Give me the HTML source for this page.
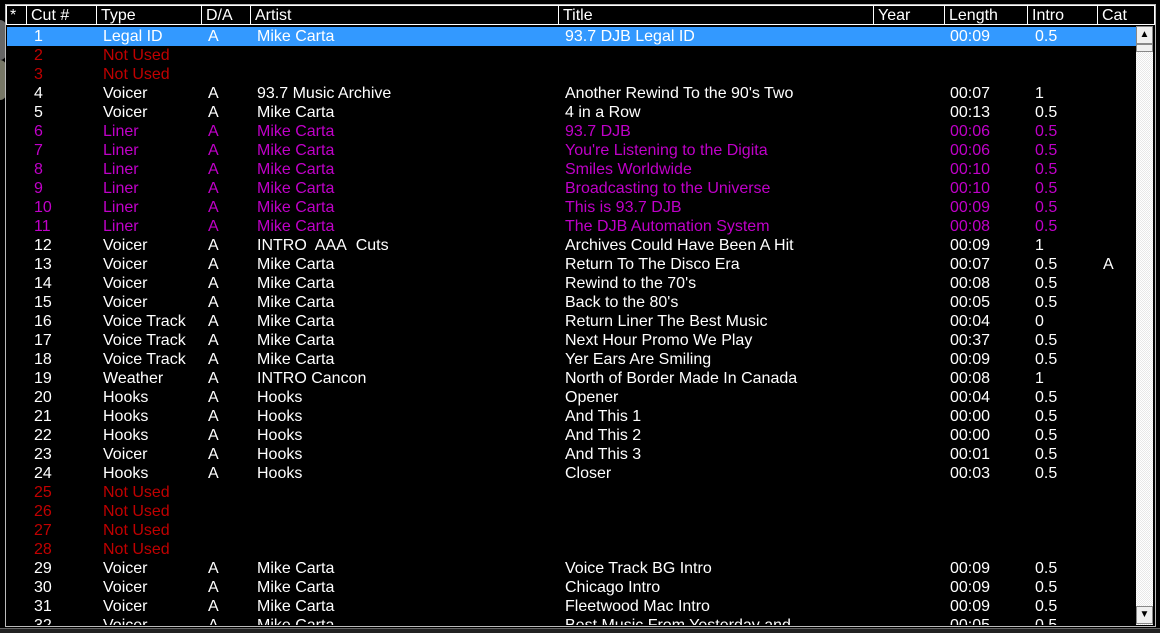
<!DOCTYPE html>
<html><head><style>
body{margin:0;width:1160px;height:632px;background:#000;overflow:hidden;position:relative;font-family:"Liberation Sans",Arial,sans-serif;font-size:16px;color:#fff}
.h{position:absolute;top:5px;height:20px;border:1px solid #fff;border-right:none;box-sizing:border-box;line-height:19px;padding-left:4px;color:#fff}
.r{position:absolute;left:7px;width:1129px;height:19px;line-height:20px}
.r span{position:absolute;top:0;white-space:nowrap}
.sel{background:#3399ff}
.red{color:#c00000}.mag{color:#c000c8}
</style></head><body>
<div style="position:absolute;left:0;top:20px;width:6px;height:40px;background:#666;border-radius:0 6px 6px 0"></div>
<div style="position:absolute;left:0;top:60px;width:6px;height:40px;background:#776;border-radius:0 6px 6px 0"></div>
<div style="position:absolute;left:5px;top:4px;width:1151px;height:623px;border:1px solid #bbb;box-sizing:border-box"></div>
<div style="position:absolute;left:0;top:628px;width:1160px;height:4px;background:#222;border-top:1px solid #666"></div>
<div class="h" style="left:6px;width:20px;padding-left:3px">*</div>
<div class="h" style="left:26px;width:70px">Cut #</div>
<div class="h" style="left:96px;width:105px">Type</div>
<div class="h" style="left:201px;width:49px">D/A</div>
<div class="h" style="left:250px;width:308px">Artist</div>
<div class="h" style="left:558px;width:315px">Title</div>
<div class="h" style="left:873px;width:71px">Year</div>
<div class="h" style="left:944px;width:83px">Length</div>
<div class="h" style="left:1027px;width:70px">Intro</div>
<div class="h" style="left:1097px;width:58px;border-right:1px solid #fff">Cat</div>
<div id="rows"></div>
<div style="position:absolute;left:1136px;top:26px;width:17px;height:599px;background:repeating-conic-gradient(#fff 0 25%,#e8e8e8 0 50%) 0 0/2px 2px"></div>
<div style="position:absolute;left:1136px;top:26px;width:17px;height:18px;background:#f0f0f0;border:1px solid #888;box-sizing:border-box;text-align:center;font-size:10px;line-height:16px;color:#000">▲</div>
<div style="position:absolute;left:1136px;top:44px;width:17px;height:8px;background:#f0f0f0;border:1px solid #888;box-sizing:border-box"></div>
<div style="position:absolute;left:1136px;top:606px;width:17px;height:18px;background:#f0f0f0;border:1px solid #888;box-sizing:border-box;text-align:center;font-size:10px;line-height:16px;color:#000">▼</div>
<script>
var d=[
["1","Legal ID","A","Mike Carta","93.7 DJB Legal ID","00:09","0.5","","sel"],
["2","Not Used","","","","","","","red"],
["3","Not Used","","","","","","","red"],
["4","Voicer","A","93.7 Music Archive","Another Rewind To the 90's Two","00:07","1","",""],
["5","Voicer","A","Mike Carta","4 in a Row","00:13","0.5","",""],
["6","Liner","A","Mike Carta","93.7 DJB","00:06","0.5","","mag"],
["7","Liner","A","Mike Carta","You're Listening to the Digita","00:06","0.5","","mag"],
["8","Liner","A","Mike Carta","Smiles Worldwide","00:10","0.5","","mag"],
["9","Liner","A","Mike Carta","Broadcasting to the Universe","00:10","0.5","","mag"],
["10","Liner","A","Mike Carta","This is 93.7 DJB","00:09","0.5","","mag"],
["11","Liner","A","Mike Carta","The DJB Automation System","00:08","0.5","","mag"],
["12","Voicer","A","INTRO&nbsp; AAA&nbsp; Cuts","Archives Could Have Been A Hit","00:09","1","",""],
["13","Voicer","A","Mike Carta","Return To The Disco Era","00:07","0.5","A",""],
["14","Voicer","A","Mike Carta","Rewind to the 70's","00:08","0.5","",""],
["15","Voicer","A","Mike Carta","Back to the 80's","00:05","0.5","",""],
["16","Voice Track","A","Mike Carta","Return Liner The Best Music","00:04","0","",""],
["17","Voice Track","A","Mike Carta","Next Hour Promo We Play","00:37","0.5","",""],
["18","Voice Track","A","Mike Carta","Yer Ears Are Smiling","00:09","0.5","",""],
["19","Weather","A","INTRO Cancon","North of Border Made In Canada","00:08","1","",""],
["20","Hooks","A","Hooks","Opener","00:04","0.5","",""],
["21","Hooks","A","Hooks","And This 1","00:00","0.5","",""],
["22","Hooks","A","Hooks","And This 2","00:00","0.5","",""],
["23","Voicer","A","Hooks","And This 3","00:01","0.5","",""],
["24","Hooks","A","Hooks","Closer","00:03","0.5","",""],
["25","Not Used","","","","","","","red"],
["26","Not Used","","","","","","","red"],
["27","Not Used","","","","","","","red"],
["28","Not Used","","","","","","","red"],
["29","Voicer","A","Mike Carta","Voice Track BG Intro","00:09","0.5","",""],
["30","Voicer","A","Mike Carta","Chicago Intro","00:09","0.5","",""],
["31","Voicer","A","Mike Carta","Fleetwood Mac Intro","00:09","0.5","",""],
["32","Voicer","A","Mike Carta","Best Music From Yesterday and","00:05","0.5","",""]];
var xs=[27,96,201,250,558,943,1028,1096],h="";
d.forEach(function(r,i){var t=27+19*i;var hh=Math.min(19,625-t);
h+='<div class="r '+r[8]+'" style="top:'+t+'px;height:'+hh+'px;overflow:hidden">';
for(var j=0;j<8;j++)h+='<span style="left:'+xs[j]+'px">'+r[j]+'</span>';h+='</div>';});
document.getElementById('rows').innerHTML=h;
</script>
</body></html>
